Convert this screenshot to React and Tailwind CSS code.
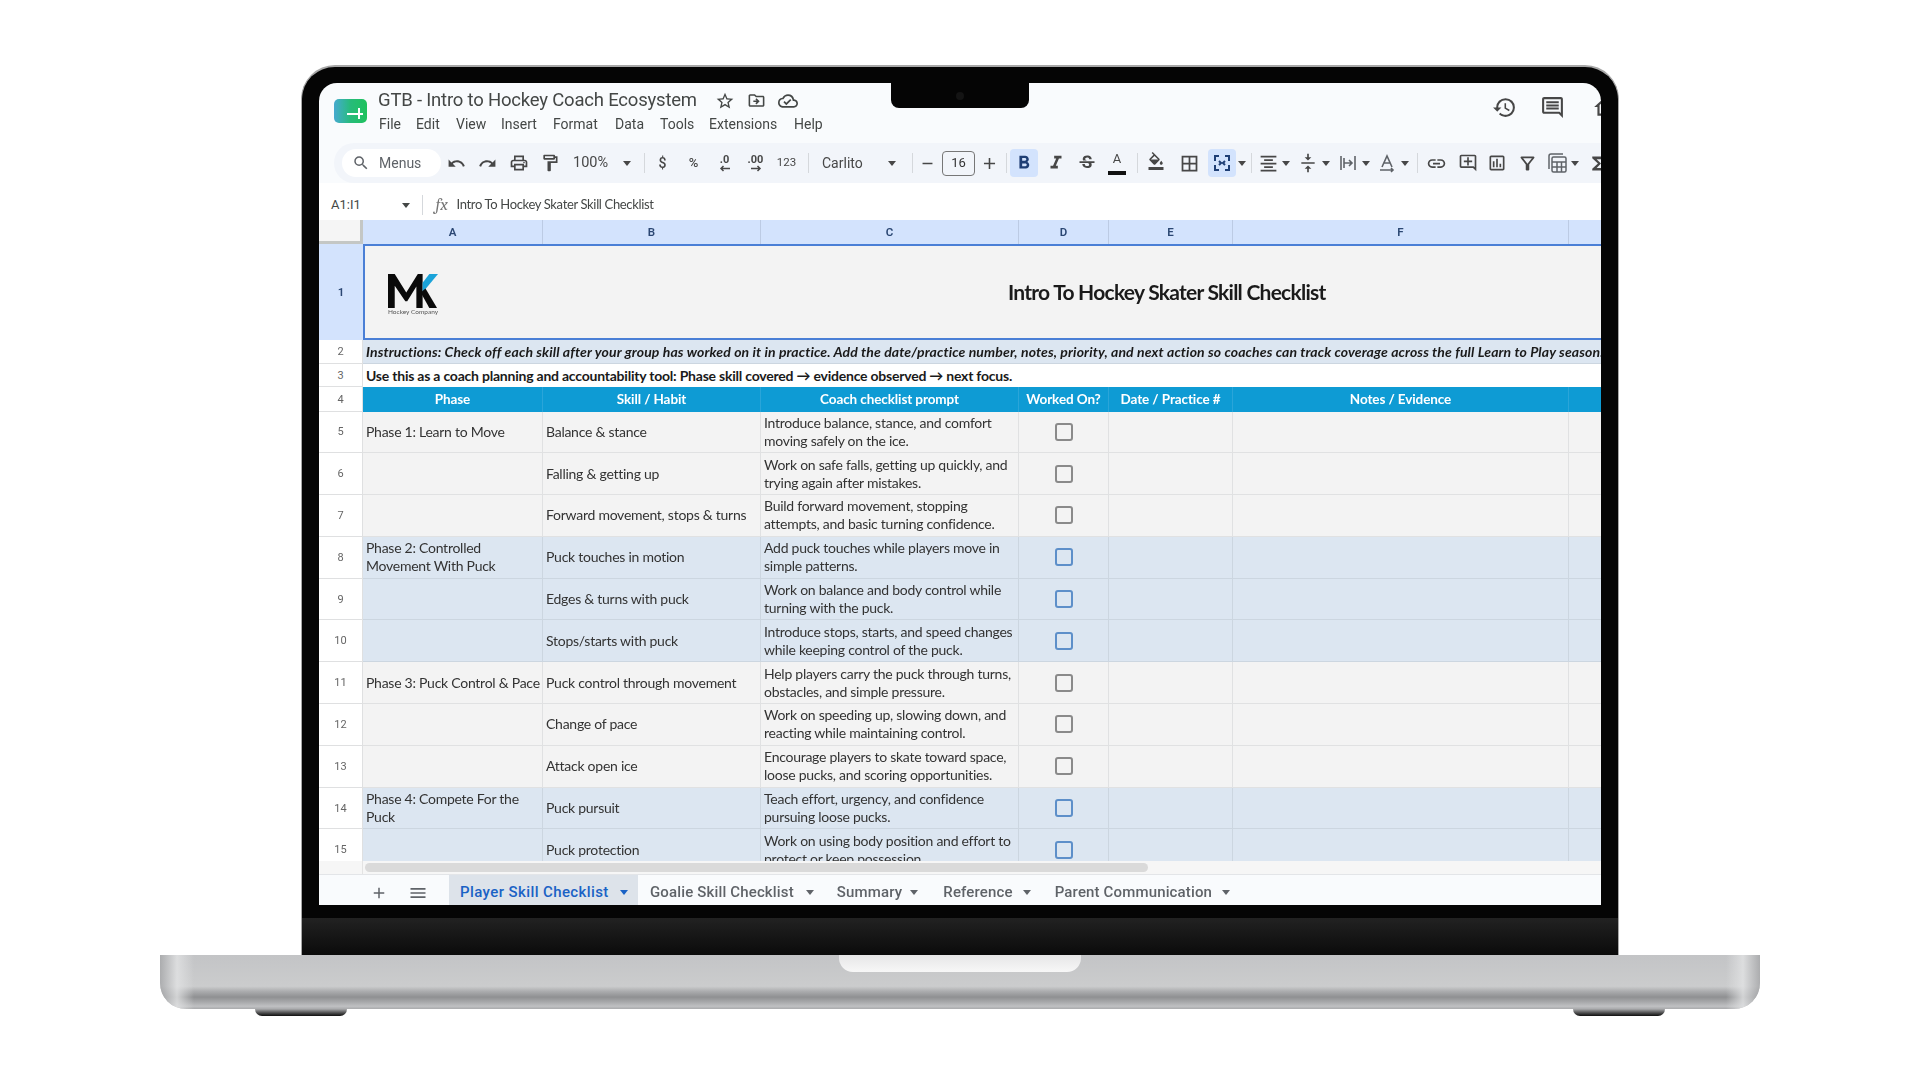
import {
  MdAdd, MdFormatAlignCenter, MdFormatBold, MdFormatColorFill, MdFormatItalic, MdFunctions, MdLink, MdMenu,
  MdOutlineAddComment, MdOutlineBorderAll, MdOutlineCloudDone, MdOutlineComment,
  MdOutlineDriveFileMove, MdOutlineFilterAlt, MdOutlineFormatPaint, MdOutlineHistory, MdOutlineHome,
  MdOutlineInsertChart, MdOutlinePrint, MdOutlineStarBorder, MdOutlineVerticalAlignCenter, MdRedo, MdRemove,
  MdSearch, MdStrikethroughS, MdUndo,
} from 'react-icons/md';
import clsx from 'clsx';
import { twMerge } from 'tailwind-merge';

const GRID = 'grid grid-cols-[44px_180px_218px_258px_90px_124px_336px_32px]';
const CELL_FONT = '[font-family:Lato,sans-serif]';
const ROW_NUMBER = 'flex items-center justify-center border-r border-b border-[#dfe0e1] bg-white pt-[1px] text-[11px] font-normal tracking-normal text-[#666] [font-family:Roboto,sans-serif]';

const menus = [
  ['File', 'w-[37px]'], ['Edit', 'w-[40px]'], ['View', 'w-[45px]'], ['Insert', 'w-[52px]'], ['Format', 'w-[62px]'],
  ['Data', 'w-[45px]'], ['Tools', 'w-[49px]'], ['Extensions', 'w-[85px]'], ['Help', 'w-[40px]'],
];

const columns = ['A', 'B', 'C', 'D', 'E', 'F', ''];

const rows = [
  { n: 5, phase: 'Phase 1: Learn to Move', skill: 'Balance & stance', prompt: ['Introduce balance, stance, and comfort', 'moving safely on the ice.'] },
  { n: 6, phase: '', skill: 'Falling & getting up', prompt: ['Work on safe falls, getting up quickly, and', 'trying again after mistakes.'] },
  { n: 7, phase: '', skill: 'Forward movement, stops & turns', prompt: ['Build forward movement, stopping', 'attempts, and basic turning confidence.'] },
  { n: 8, blue: true, phase: ['Phase 2: Controlled', 'Movement With Puck'], skill: 'Puck touches in motion', prompt: ['Add puck touches while players move in', 'simple patterns.'] },
  { n: 9, blue: true, phase: '', skill: 'Edges & turns with puck', prompt: ['Work on balance and body control while', 'turning with the puck.'] },
  { n: 10, blue: true, phase: '', skill: 'Stops/starts with puck', prompt: ['Introduce stops, starts, and speed changes', 'while keeping control of the puck.'] },
  { n: 11, phase: 'Phase 3: Puck Control & Pace', skill: 'Puck control through movement', prompt: ['Help players carry the puck through turns,', 'obstacles, and simple pressure.'] },
  { n: 12, phase: '', skill: 'Change of pace', prompt: ['Work on speeding up, slowing down, and', 'reacting while maintaining control.'] },
  { n: 13, phase: '', skill: 'Attack open ice', prompt: ['Encourage players to skate toward space,', 'loose pucks, and scoring opportunities.'] },
  { n: 14, blue: true, phase: ['Phase 4: Compete For the', 'Puck'], skill: 'Puck pursuit', prompt: ['Teach effort, urgency, and confidence', 'pursuing loose pucks.'] },
  { n: 15, blue: true, phase: '', skill: 'Puck protection', prompt: ['Work on using body position and effort to', 'protect or keep possession.'] },
];

const tabs = [
  ['Goalie Skill Checklist', 'ml-[12px]', 'ml-[12px]'],
  ['Summary', 'ml-[23px]', 'ml-[8px]'],
  ['Reference', 'ml-[25px]', 'ml-[10px]'],
  ['Parent Communication', 'ml-[24px]', 'ml-[10px]'],
];

function Caret({ className }) {
  return (
    <svg viewBox="0 0 8 5" className={clsx('h-[5px] w-[8px] shrink-0', className)} fill="currentColor">
      <path d="M0 0h8L4 5z" />
    </svg>
  );
}

function Tool({ className, children }) {
  return <div className={twMerge('flex h-[28px] shrink-0 items-center justify-center text-[#474747]', className)}>{children}</div>;
}

function Divider({ className }) {
  return <div className={clsx('h-[20px] w-px shrink-0 bg-[#d5d8dc]', className)} />;
}

function MergeIcon() {
  return (
    <svg viewBox="0 0 20 20" className="h-[20px] w-[20px]" fill="none" stroke="#1f3f75" strokeWidth="2">
      <path d="M3 8V3h4M17 8V3h-4M3 12v5h4M17 12v5h-4M7 8l2 2-2 2M13 8l-2 2 2 2" />
    </svg>
  );
}

function WrapIcon() {
  return (
    <svg viewBox="0 0 20 20" className="h-[20px] w-[20px]" fill="none" stroke="#5f6368" strokeWidth="1.6">
      <path d="M3 3v14M17 3v14M6 10h8M11 7l3 3-3 3M6 5v10" />
    </svg>
  );
}

function RotateIcon() {
  return (
    <svg viewBox="0 0 20 20" className="h-[20px] w-[20px]" fill="none" stroke="#5f6368" strokeWidth="1.6">
      <path d="M5 14l5-11 5 11M7 10h6M3 17h13M14 15l2 2-2 2" />
    </svg>
  );
}

function TableCalcIcon() {
  return (
    <svg viewBox="0 0 22 22" className="h-[22px] w-[22px]" fill="none" stroke="#5f6368" strokeWidth="1.5">
      <path d="M3 17V4a2 2 0 0 1 2-2h12" />
      <rect x="6" y="5" width="14" height="15" rx="1.500" />
      <path d="M6 10h14M6 15h14M11 10v10M15.500 10v10" />
    </svg>
  );
}

function DecimalArrow({ dir }) {
  return (
    <svg viewBox="0 0 12 7" className="h-[7px] w-[12px]" fill="none" stroke="currentColor" strokeWidth="1.5">
      {dir === 'left' ? <path d="M11 3.5H2M4.5 1L2 3.5 4.5 6" /> : <path d="M1 3.5h9M7.5 1L10 3.5 7.5 6" />}
    </svg>
  );
}

function SheetsLogo() {
  return (
    <div className="relative mt-[16px] ml-[15px] h-[24px] w-[33px] shrink-0 rounded-[5px] bg-gradient-to-r from-[#46a9cf] via-[#27bb7a] to-[#1fc25c]">
      <div className="absolute top-[14px] left-[13px] h-[2px] w-[16px] bg-white" />
      <div className="absolute top-[9px] left-[24px] h-[11px] w-[2px] bg-white" />
    </div>
  );
}

function MkLogo() {
  return (
    <div className="mt-[4px] ml-[23px] flex w-[56px] flex-col">
      <svg viewBox="0 0 52 36" className="h-[35px] w-[50px]" preserveAspectRatio="none">
        <path d="M0 36V1h7l12 19L31 1h5v35h-6.500V14L20 29h-2L7 13v23z" fill="#0a0a0a" />
        <path d="M36 20L52 1h-9L36 10z" fill="#1aa3d9" />
        <path d="M34 20l5-4 12 20h-8z" fill="#0a0a0a" />
      </svg>
      <span className="text-[6.500px] leading-[8px] whitespace-nowrap text-[#555] [font-family:Lato,sans-serif]">Hockey Company</span>
    </div>
  );
}

function TextLines({ value }) {
  const lines = Array.isArray(value) ? value : value ? [value] : [];
  return lines.map((line) => (
    <div key={line} className="whitespace-nowrap">
      {line}
    </div>
  ));
}

function DataRow({ row }) {
  const tone = row.blue ? 'bg-[#dce6f1] border-[#ccd6e0]' : 'bg-[#f3f3f3] border-[#e0e1e2]';
  const cell = clsx('flex h-full flex-col justify-center overflow-hidden border-r border-b pl-[3px]', tone);
  return (
    <div className={clsx(GRID, 'h-[41.800px] text-[14px] leading-[18px] tracking-[-0.26px] text-[#333]', CELL_FONT)}>
      <div className={ROW_NUMBER}>{row.n}</div>
      <div className={cell}>
        <TextLines value={row.phase} />
      </div>
      <div className={cell}>
        <TextLines value={row.skill} />
      </div>
      <div className={cell}>
        <TextLines value={row.prompt} />
      </div>
      <div className={clsx('flex items-center justify-center border-r border-b', tone)}>
        <div className={clsx('h-[18px] w-[18px] rounded-[3px] border-[2.5px]', row.blue ? 'border-[#5d8fc9]' : 'border-[#8a8a8a]')} />
      </div>
      <div className={clsx('border-r border-b', tone)} />
      <div className={clsx('border-r border-b', tone)} />
      <div className={clsx('border-b', tone)} />
    </div>
  );
}

function Toolbar() {
  return (
    <div className="ml-[15px] flex h-[40px] shrink-0 items-center overflow-hidden rounded-l-full bg-[#f2f5fa] pl-[8px]">
      <div className="flex h-[28px] w-[99px] shrink-0 items-center rounded-full bg-white pl-[10px] text-[14px] text-[#5f6368]">
        <MdSearch size={18} />
        <span className="ml-[9px]">Menus</span>
      </div>
      <Tool className="w-[31px]"><MdUndo size={19} /></Tool>
      <Tool className="w-[31px]"><MdRedo size={19} /></Tool>
      <Tool className="w-[31px]"><MdOutlinePrint size={20} /></Tool>
      <Tool className="w-[31px]"><MdOutlineFormatPaint size={20} /></Tool>
      <Tool className="w-[74px] justify-between pr-[8px] pl-[8px] text-[14.500px]">
        <span>100%</span>
        <Caret />
      </Tool>
      <Divider className="ml-[5px]" />
      <Tool className="ml-[2px] w-[31px] text-[14px] font-medium">$</Tool>
      <Tool className="w-[31px] text-[13px] font-medium">%</Tool>
      <Tool className="w-[31px] flex-col text-[11px] leading-[11px] font-bold">
        <span>.0</span>
        <DecimalArrow dir="left" />
      </Tool>
      <Tool className="w-[31px] flex-col text-[11px] leading-[11px] font-bold">
        <span>.00</span>
        <DecimalArrow dir="right" />
      </Tool>
      <Tool className="w-[31px] text-[11.500px]">123</Tool>
      <Divider className="ml-[6px]" />
      <Tool className="w-[97px] justify-between pr-[10px] pl-[13px] text-[14px]">
        <span>Carlito</span>
        <Caret />
      </Tool>
      <Divider className="ml-[6px]" />
      <Tool className="w-[29px]"><MdRemove size={17} /></Tool>
      <div className="flex h-[25px] w-[33px] shrink-0 items-center justify-center rounded-[4px] border border-[#777] text-[13px] text-[#333]">16</div>
      <Tool className="w-[28px]"><MdAdd size={19} /></Tool>
      <Divider className="ml-[3px]" />
      <Tool className="ml-[3px] w-[28px] rounded-[4px] bg-[#d3e3fd] text-[#1f3f75]"><MdFormatBold size={22} /></Tool>
      <Tool className="ml-[2px] w-[31px]"><MdFormatItalic size={22} /></Tool>
      <Tool className="w-[31px]"><MdStrikethroughS size={20} /></Tool>
      <Tool className="relative w-[30px] items-start text-[13px] leading-[20px]">
        <span>A</span>
        <div className="absolute right-[6px] bottom-[2px] left-[6px] h-[4px] bg-[#111]" />
      </Tool>
      <Divider className="ml-[5px]" />
      <Tool className="w-[36px] pb-[5px]"><MdFormatColorFill size={18} /></Tool>
      <Tool className="w-[30px]"><MdOutlineBorderAll size={21} /></Tool>
      <Tool className="ml-[4px] w-[28px] rounded-[4px] bg-[#d3e3fd]"><MergeIcon /></Tool>
      <Tool className="w-[12px]"><Caret /></Tool>
      <Divider className="ml-[3px]" />
      <Tool className="ml-[2px] w-[28px]"><MdFormatAlignCenter size={21} /></Tool>
      <Tool className="w-[8px]"><Caret /></Tool>
      <Tool className="ml-[4px] w-[28px]"><MdOutlineVerticalAlignCenter size={20} /></Tool>
      <Tool className="w-[8px]"><Caret /></Tool>
      <Tool className="ml-[4px] w-[28px]"><WrapIcon /></Tool>
      <Tool className="w-[8px]"><Caret /></Tool>
      <Tool className="ml-[3px] w-[28px]"><RotateIcon /></Tool>
      <Tool className="w-[8px]"><Caret /></Tool>
      <Divider className="ml-[8px]" />
      <Tool className="w-[36px]"><MdLink size={21} /></Tool>
      <Tool className="w-[27px]"><MdOutlineAddComment size={20} /></Tool>
      <Tool className="w-[31px]"><MdOutlineInsertChart size={20} /></Tool>
      <Tool className="w-[31px]"><MdOutlineFilterAlt size={21} /></Tool>
      <Tool className="w-[28px]"><TableCalcIcon /></Tool>
      <Tool className="w-[8px]"><Caret /></Tool>
      <Tool className="ml-[6px] w-[24px]"><MdFunctions size={21} /></Tool>
    </div>
  );
}

function Sheet() {
  return (
    <div className="h-[641px] shrink-0 overflow-hidden">
      {/* Column headers */}
      <div className={clsx(GRID, 'h-[24px] text-[11.500px] font-semibold text-[#2b4773] [font-family:Roboto,sans-serif]')}>
        <div className="border-r-[3px] border-b-[3px] border-[#c4c7c5] bg-[#f5f5f5]" />
        {columns.map((c, i) => (
          <div key={i} className="flex items-center justify-center border-r border-[#bccbe4] bg-[#d3e3fd] pt-[1px] last:border-r-0">
            {c}
          </div>
        ))}
      </div>

      {/* Merged title row */}
      <div className="flex h-[96px]">
        <div className="flex w-[44px] shrink-0 items-center justify-center bg-[#d3e3fd] pt-[1px] text-[11.500px] font-semibold text-[#2b4773] [font-family:Roboto,sans-serif]">1</div>
        <div className="relative flex flex-1 items-center border-2 border-r-0 border-[#4a7fd6] bg-[#f3f3f3]">
          <MkLogo />
          <div className={clsx('absolute top-[28px] left-[643px] text-[21px] leading-[36px] font-bold tracking-[-0.75px] whitespace-nowrap text-[#1a1a1a]', CELL_FONT)}>
            Intro To Hockey Skater Skill Checklist
          </div>
        </div>
      </div>

      {/* Instruction rows */}
      <div className={clsx('flex h-[24px] text-[14px] leading-[24px] tracking-[0.12px]', CELL_FONT)}>
        <div className={clsx(ROW_NUMBER, 'w-[44px] shrink-0')}>2</div>
        <div className="flex-1 overflow-hidden border-b border-[#ccd6e0] bg-[#dce6f1] pl-[3px] font-bold whitespace-nowrap text-[#1a1a1a] italic">
          Instructions: Check off each skill after your group has worked on it in practice. Add the date/practice number, notes, priority, and next action so coaches can track coverage across the full Learn to Play season.
        </div>
      </div>
      <div className={clsx('flex h-[23px] text-[14px] leading-[23px] tracking-[-0.22px]', CELL_FONT)}>
        <div className={clsx(ROW_NUMBER, 'w-[44px] shrink-0')}>3</div>
        <div className="flex-1 overflow-hidden bg-white pl-[3px] font-bold whitespace-nowrap text-[#1a1a1a]">
          Use this as a coach planning and accountability tool: Phase skill covered → evidence observed → next focus.
        </div>
      </div>

      {/* Table header */}
      <div className={clsx(GRID, 'h-[24.500px] text-[13.500px] font-bold tracking-[-0.1px] text-white', CELL_FONT)}>
        <div className={twMerge(ROW_NUMBER, 'pt-[3px]')}>4</div>
        {['Phase', 'Skill / Habit', 'Coach checklist prompt', 'Worked On?', 'Date / Practice #', 'Notes / Evidence', ''].map((h, i) => (
          <div key={i} className="flex items-center justify-center border-r border-[#2aa5d9] bg-[#0e9bd4] whitespace-nowrap last:border-r-0">
            {h}
          </div>
        ))}
      </div>

      {rows.map((row) => (
        <DataRow key={row.n} row={row} />
      ))}
    </div>
  );
}

function SheetTabs() {
  return (
    <div className="flex h-[31px] shrink-0 border-t border-[#e3e5e8] text-[15px] font-medium tracking-[0.15px] text-[#5f6368] [font-family:Roboto,sans-serif]">
      <div className="flex w-[130px] shrink-0 items-center pt-[5px] pl-[51px]">
        <MdAdd size={18} />
        <MdMenu size={20} className="ml-[20px]" />
      </div>
      <div className="flex h-full w-[189px] shrink-0 items-center bg-[#dde3ea] pt-[5px] pl-[11px] tracking-[0.4px] text-[#1a62c5]">
        <span>Player Skill Checklist</span>
        <Caret className="ml-[11px]" />
      </div>
      {tabs.map(([name, margin, caretMargin]) => (
        <div key={name} className={clsx('flex items-center pt-[5px]', margin)}>
          <span>{name}</span>
          <Caret className={caretMargin} />
        </div>
      ))}
    </div>
  );
}

function Screen() {
  return (
    <div className="relative flex h-[822px] flex-col overflow-hidden rounded-t-[18px] bg-[#f9fbfd] blur-[0.4px] [font-family:Roboto,sans-serif]">
      {/* Camera notch */}
      <div className="absolute top-0 left-[572px] flex h-[25px] w-[138px] items-center justify-center rounded-b-[8px] bg-[#050505]">
        <div className="h-[8px] w-[8px] rounded-full bg-[#141414]" />
      </div>

      {/* Title and menu */}
      <div className="flex h-[60px] shrink-0">
        <SheetsLogo />
        <div className="ml-[11px] flex flex-col pt-[4px]">
          <div className="flex h-[27px] items-center text-[#444746]">
            <span className="w-[337px] text-[18.500px] tracking-[-0.2px] whitespace-nowrap">GTB - Intro to Hockey Coach Ecosystem</span>
            <MdOutlineStarBorder size={20} />
            <MdOutlineDriveFileMove size={19} className="ml-[12px]" />
            <MdOutlineCloudDone size={20} className="ml-[12px]" />
          </div>
          <div className="mt-[-0.500px] ml-[1px] flex text-[14px] text-[#444746]">
            {menus.map(([label, width]) => (
              <span key={label} className={width}>{label}</span>
            ))}
          </div>
        </div>
        <div className="ml-auto flex h-[48px] items-center text-[#474747]">
          <MdOutlineHistory size={25} />
          <MdOutlineComment size={25} className="ml-[23px]" />
          <MdOutlineHome size={26} className="mr-[-17px] ml-[27px]" />
        </div>
      </div>

      <Toolbar />

      {/* Formula bar */}
      <div className="flex h-[37px] shrink-0 items-center bg-white pt-[7px] text-[#444746]">
        <span className="ml-[12px] w-[71px] text-[13px]">A1:I1</span>
        <Caret />
        <div className="ml-[12px] h-[20px] w-px bg-[#d5d8dc]" />
        <span className="ml-[12.500px] w-[21px] font-serif text-[17px] text-[#777] italic">fx</span>
        <span className={clsx('text-[13px] tracking-[-0.35px]', CELL_FONT)}>Intro To Hockey Skater Skill Checklist</span>
      </div>

      <Sheet />

      {/* Horizontal scrollbar */}
      <div className="flex h-[13px] shrink-0 bg-[#f6f6f6]">
        <div className="w-[44px] shrink-0 border-r border-[#e3e3e3]" />
        <div className="my-[2px] ml-[2px] w-[783px] rounded-full bg-[#dadada]" />
      </div>

      <SheetTabs />
    </div>
  );
}

export default function App() {
  return (
    <div className="flex h-[1080px] flex-col items-center overflow-hidden bg-white pt-[65px]">
      {/* Lid */}
      <div className="flex h-[890px] w-[1318px] shrink-0 flex-col overflow-hidden rounded-t-[34px] border-x-[1px] border-t-[2px] border-[#a8a8a8] bg-[#050505]">
        <div className="px-[17px] pt-[16px]">
          <Screen />
        </div>
        <div className="mt-[13px] flex-1 bg-gradient-to-b from-[#222222] to-[#0b0b0b]" />
      </div>

      {/* Base */}
      <div className="relative h-[54px] w-[1600px] shrink-0 overflow-hidden rounded-b-[26px] bg-[linear-gradient(to_bottom,#c3c4c6_0%,#cbcccd_58%,#a9aaac_68%,#8f9092_78%,#a5a6a8_86%,#bfc0c2_95%,#a9aaac_100%)]">
        <div className="absolute inset-y-0 left-0 w-[34px] bg-gradient-to-r from-[#a5a6a8] via-[#e2e3e4] to-transparent opacity-80" />
        <div className="absolute inset-y-0 right-0 w-[34px] bg-gradient-to-l from-[#a5a6a8] via-[#e2e3e4] to-transparent opacity-80" />
        <div className="absolute top-0 left-[679px] h-[17px] w-[242px] rounded-b-[14px] bg-gradient-to-b from-[#e6e6e7] to-[#f7f7f7]" />
      </div>

      {/* Feet */}
      <div className="flex w-[1410px] shrink-0 justify-between">
        <div className="h-[7px] w-[92px] rounded-b-[10px] bg-gradient-to-b from-[#a9aaac] to-[#101010]" />
        <div className="h-[7px] w-[92px] rounded-b-[10px] bg-gradient-to-b from-[#a9aaac] to-[#101010]" />
      </div>
    </div>
  );
}
